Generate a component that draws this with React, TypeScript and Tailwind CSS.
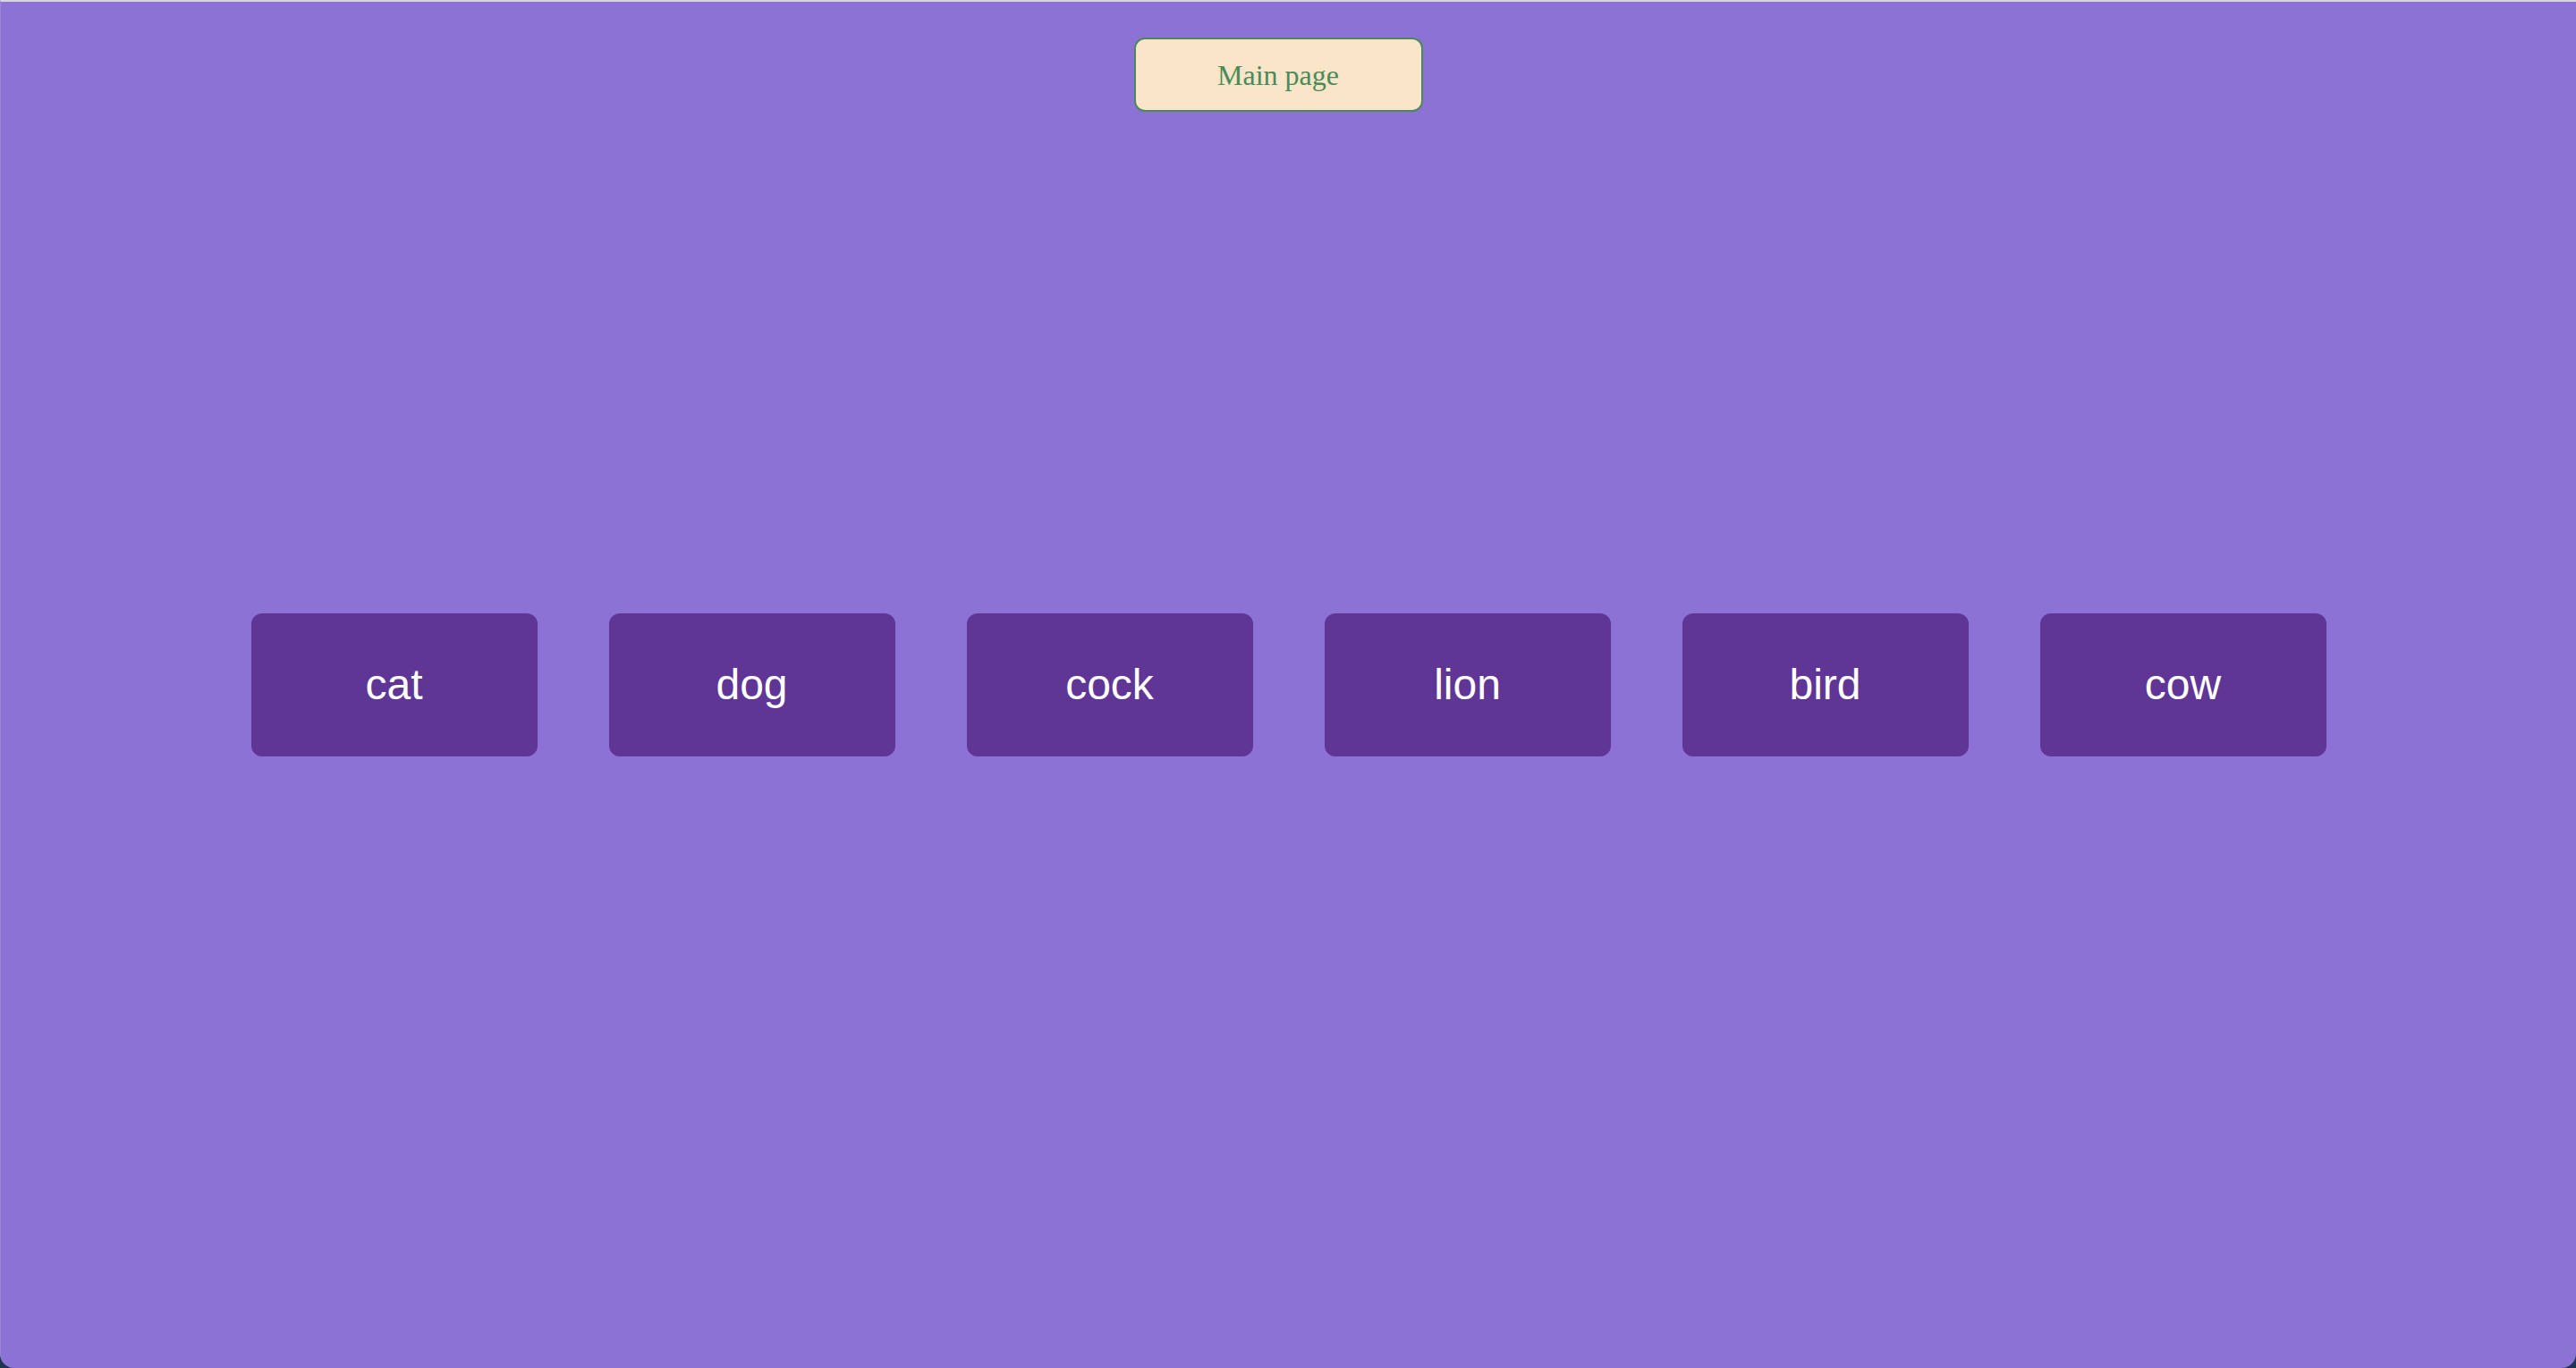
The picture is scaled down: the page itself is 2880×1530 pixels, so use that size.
import React from 'react';

const animals: string[] = ['cat', 'dog', 'cock', 'lion', 'bird', 'cow'];

const App: React.FC = () => {
    return (
        <div className='w-full h-[1530px] bg-[#1e3450] overflow-hidden'>
            <div className='h-full bg-[#8c72d4] border-t-2 border-t-[#d8d6de] border-l border-l-[#9a84d8] rounded-b-[16px] flex flex-col items-center'>
                <button
                    type="button"
                    className="mt-[40px] mr-[23px] w-[323px] h-[83px] bg-[#fbe5c8] border-2 border-[#4a8a5a] rounded-[12px] text-[#4a8a5a] text-[32px] font-['Liberation_Serif',serif]"
                >
                    Main page
                </button>
                <div className='mt-[561px] flex gap-[80px]'>
                    {animals.map((name) => (
                        <div
                            key={name}
                            className="w-[320px] h-[160px] rounded-[12px] bg-[#5f3596] flex items-center justify-center text-white text-[48px] font-['Liberation_Sans',Arial,sans-serif]"
                        >
                            {name}
                        </div>
                    ))}
                </div>
            </div>
        </div>
    );
};

export default App;
